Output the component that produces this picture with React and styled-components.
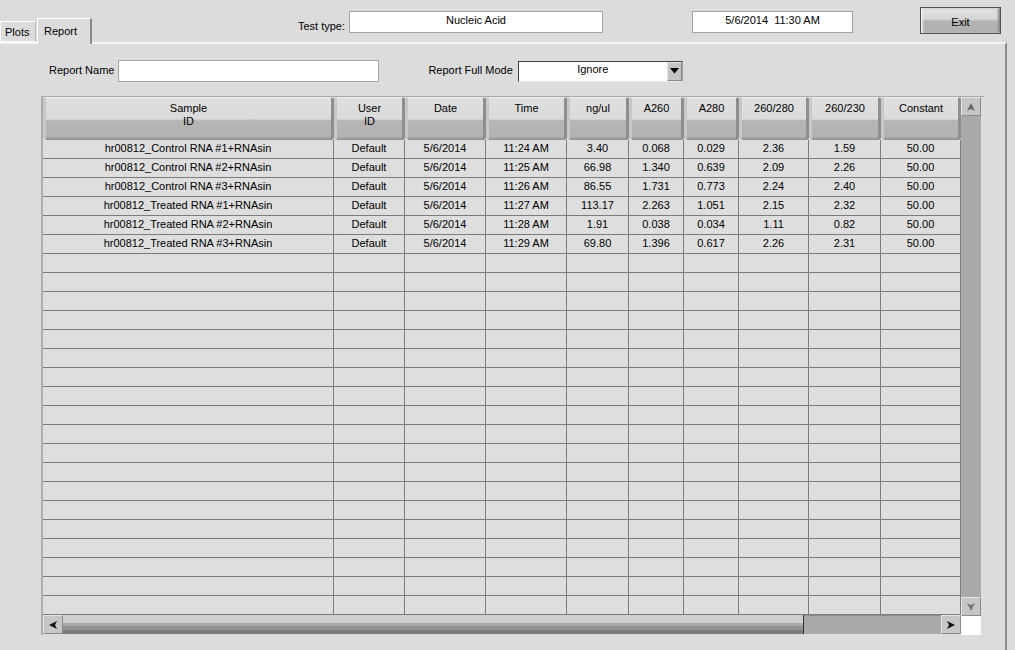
import React from "react";
import styled, { createGlobalStyle } from "styled-components";

const GlobalStyle = createGlobalStyle`
    html, body {
        margin: 0;
        padding: 0;
        background: #dcdcdc;
    }
    body {
        font-family: "Liberation Sans", Arial, sans-serif;
        font-size: 11px;
        color: #000;
    }
`;

const columns = [
    { title: ["Sample", "ID"], width: 291 },
    { title: ["User", "ID"], width: 71 },
    { title: ["Date"], width: 81 },
    { title: ["Time"], width: 81 },
    { title: ["ng/ul"], width: 62 },
    { title: ["A260"], width: 55 },
    { title: ["A280"], width: 55 },
    { title: ["260/280"], width: 70 },
    { title: ["260/230"], width: 72 },
    { title: ["Constant"], width: 80 },
];

const rows = [
    ["hr00812_Control RNA #1+RNAsin", "Default", "5/6/2014", "11:24 AM", "3.40", "0.068", "0.029", "2.36", "1.59", "50.00"],
    ["hr00812_Control RNA #2+RNAsin", "Default", "5/6/2014", "11:25 AM", "66.98", "1.340", "0.639", "2.09", "2.26", "50.00"],
    ["hr00812_Control RNA #3+RNAsin", "Default", "5/6/2014", "11:26 AM", "86.55", "1.731", "0.773", "2.24", "2.40", "50.00"],
    ["hr00812_Treated RNA #1+RNAsin", "Default", "5/6/2014", "11:27 AM", "113.17", "2.263", "1.051", "2.15", "2.32", "50.00"],
    ["hr00812_Treated RNA #2+RNAsin", "Default", "5/6/2014", "11:28 AM", "1.91", "0.038", "0.034", "1.11", "0.82", "50.00"],
    ["hr00812_Treated RNA #3+RNAsin", "Default", "5/6/2014", "11:29 AM", "69.80", "1.396", "0.617", "2.26", "2.31", "50.00"],
];

const TOTAL_ROWS = 25;
const gridCols = columns.map((c) => c.width + "px").join(" ");

const App = () => {
    const allRows = [];
    for (let i = 0; i < TOTAL_ROWS; i++) {
        allRows.push(rows[i] || columns.map(() => ""));
    }

    return (
        <Page>
            <GlobalStyle />
            <TopRow>
                <Tabs>
                    <Tab>Plots</Tab>
                    <Tab active>Report</Tab>
                </Tabs>
                <FieldGroup>
                    <TopLabel>Test type:</TopLabel>
                    <ReadBox width={254}>Nucleic Acid</ReadBox>
                </FieldGroup>
                <DateBox>
                    <ReadBox width={161}>5/6/2014&nbsp;&nbsp;11:30 AM</ReadBox>
                </DateBox>
                <ExitButton>Exit</ExitButton>
            </TopRow>

            <Panel>
                <FormRow>
                    <FormLabel>Report Name</FormLabel>
                    <TextInput />
                    <FormLabel gap={49}>Report Full Mode</FormLabel>
                    <Select>
                        <SelectValue>Ignore</SelectValue>
                        <SelectArrow>
                            <svg width="9" height="6" viewBox="0 0 9 6">
                                <path d="M0 0 H9 L4.5 5.5 Z" fill="#000" />
                            </svg>
                        </SelectArrow>
                    </Select>
                </FormRow>

                <TableFrame>
                    <TableMain>
                        <HeaderRow>
                            {columns.map((c, i) => (
                                <HeaderCell key={i}>
                                    {c.title.map((t, j) => (
                                        <div key={j}>{t}</div>
                                    ))}
                                </HeaderCell>
                            ))}
                        </HeaderRow>
                        {allRows.map((r, i) => (
                            <BodyRow key={i}>
                                {r.map((v, j) => (
                                    <Cell key={j}>{v}</Cell>
                                ))}
                            </BodyRow>
                        ))}
                        <HScroll>
                            <ScrollBtn>
                                <svg width="10" height="10" viewBox="0 0 10 10">
                                    <path d="M1 5 L9 1 L7 5 L9 9 Z" fill="#111" />
                                </svg>
                            </ScrollBtn>
                            <HThumb />
                            <HTrack />
                            <ScrollBtn>
                                <svg width="10" height="10" viewBox="0 0 10 10">
                                    <path d="M9 5 L1 1 L3 5 L1 9 Z" fill="#111" />
                                </svg>
                            </ScrollBtn>
                        </HScroll>
                    </TableMain>
                    <VScrollCol>
                        <VScroll>
                            <ScrollBtn>
                                <svg width="10" height="10" viewBox="0 0 10 10">
                                    <path d="M5 1 L9 9 L5 7 L1 9 Z" fill="#666" />
                                </svg>
                            </ScrollBtn>
                            <VTrack />
                            <ScrollBtn>
                                <svg width="10" height="10" viewBox="0 0 10 10">
                                    <path d="M5 9 L9 1 L5 3 L1 1 Z" fill="#777" />
                                </svg>
                            </ScrollBtn>
                        </VScroll>
                        <Corner />
                    </VScrollCol>
                </TableFrame>
            </Panel>
        </Page>
    );
};

const Page = styled.div`
    width: 1015px;
    height: 650px;
    overflow: hidden;
    background: #dcdcdc;
`;

const TopRow = styled.div`
    display: flex;
    align-items: flex-start;
    height: 42px;
`;

const Tabs = styled.div`
    display: flex;
    align-self: flex-end;
    align-items: flex-end;
    width: 92px;
    height: 26px;
`;

const Tab = styled.div`
    box-sizing: border-box;
    height: ${(props) => (props.active ? "26px" : "21px")};
    margin-bottom: ${(props) => (props.active ? "-2px" : "0")};
    padding: ${(props) => (props.active ? "6px 0 0 6px" : "4px 0 0 4px")};
    width: ${(props) => (props.active ? "55px" : "36px")};
    margin-left: ${(props) => (props.active ? "1px" : "0")};
    background: #dcdcdc;
    border-top: 1px solid #fff;
    border-left: 1px solid #fff;
    border-right: ${(props) => (props.active ? "2px solid #8a8a8a" : "1px solid #bdbdbd")};
    border-bottom: ${(props) => (props.active ? "none" : "1px solid #fff")};
    position: relative;
    z-index: ${(props) => (props.active ? 2 : 1)};
`;

const FieldGroup = styled.div`
    display: flex;
    align-items: flex-start;
    margin-left: 158px;
    margin-top: 11px;
`;

const TopLabel = styled.div`
    width: 95px;
    text-align: right;
    padding-top: 9px;
    margin-right: 4px;
`;

const ReadBox = styled.div`
    box-sizing: border-box;
    width: ${(props) => props.width}px;
    height: 22px;
    background: #fff;
    border: 1px solid #a4a4a4;
    text-align: center;
    padding-top: 2px;
`;

const DateBox = styled.div`
    margin-left: 89px;
    margin-top: 11px;
`;

const ExitButton = styled.div`
    box-sizing: border-box;
    width: 81px;
    height: 27px;
    margin-left: 67px;
    margin-top: 7px;
    border: 1px solid #505050;
    background: linear-gradient(to bottom, #e2e2e2 0%, #d6d6d6 45%, #b4b4b4 52%, #b0b0b0 100%);
    box-shadow: inset 2px 0 2px #eaeaea, inset -2px 0 2px #8c8c8c;
    text-align: center;
    padding-top: 8px;
`;

const Panel = styled.div`
    box-sizing: border-box;
    width: 1007px;
    height: 608px;
    border-top: 2px solid #f4f4f4;
    border-right: 2px solid #8c8c8c;
    padding: 16px 0 0 41px;
`;

const FormRow = styled.div`
    display: flex;
    align-items: center;
    height: 22px;
`;

const FormLabel = styled.div`
    margin-left: ${(props) => (props.gap ? props.gap : 8)}px;
    margin-right: 4px;
    padding-bottom: 2px;
`;

const TextInput = styled.div`
    box-sizing: border-box;
    width: 261px;
    height: 22px;
    background: #fff;
    border: 1px solid #a4a4a4;
`;

const Select = styled.div`
    box-sizing: border-box;
    display: flex;
    width: 165px;
    height: 21px;
    background: #fff;
    border-top: 1px solid #404040;
    border-left: 1px solid #404040;
    border-right: 1px solid #a0a0a0;
    border-bottom: 1px solid #e8e8e8;
    margin-left: 1px;
`;

const SelectValue = styled.div`
    flex: 1;
    text-align: center;
    padding-top: 1px;
`;

const SelectArrow = styled.div`
    box-sizing: border-box;
    width: 15px;
    display: flex;
    align-items: center;
    justify-content: center;
    background: #c4c4c4;
    border: 1px solid #8a8a8a;
    border-top-color: #e4e4e4;
    border-left-color: #e4e4e4;
`;

const TableFrame = styled.div`
    display: flex;
    width: 941px;
    margin-top: 14px;
    border-top: 1px solid #a8a8a8;
    border-left: 2px solid #acacac;
`;

const TableMain = styled.div`
    display: flex;
    flex-direction: column;
    width: 918px;
`;

const HeaderRow = styled.div`
    display: grid;
    grid-template-columns: ${gridCols};
    height: 43px;
`;

const HeaderCell = styled.div`
    box-sizing: border-box;
    height: 43px;
    padding-top: 4px;
    text-align: center;
    line-height: 13px;
    background: linear-gradient(to bottom, #e0e0e0 0%, #dadada 50%, #b5b5b5 54%, #b2b2b2 92%, #8c8c8c 100%);
    border-top: 1px solid #f0f0f0;
    border-left: 3px solid #c8c8c8;
    border-right: 3px solid #8e8e8e;
    border-radius: 3px;
`;

const BodyRow = styled.div`
    display: grid;
    grid-template-columns: ${gridCols};
    height: 19px;
`;

const Cell = styled.div`
    box-sizing: border-box;
    height: 19px;
    line-height: 17px;
    text-align: center;
    white-space: nowrap;
    overflow: hidden;
    background: #dedede;
    border-right: 1px solid #7c7c7c;
    border-bottom: 1px solid #7c7c7c;
`;

const HScroll = styled.div`
    display: flex;
    height: 19px;
`;

const ScrollBtn = styled.div`
    box-sizing: border-box;
    width: 20px;
    height: 19px;
    display: flex;
    align-items: center;
    justify-content: center;
    background: #c6c6c6;
    border: 1px solid #8a8a8a;
    border-top-color: #e6e6e6;
    border-left-color: #e6e6e6;
`;

const HThumb = styled.div`
    width: 740px;
    background: linear-gradient(to bottom, #cfcfcf 0%, #cfcfcf 40%, #a9a9a9 40%, #a9a9a9 60%, #949494 60%, #949494 80%, #7c7c7c 80%, #7c7c7c 100%);
    border-right: 1px solid #333;
`;

const HTrack = styled.div`
    flex: 1;
    background: #a9a9a9;
    border-top: 1px solid #8a8a8a;
`;

const VScrollCol = styled.div`
    display: flex;
    flex-direction: column;
    width: 20px;
`;

const VScroll = styled.div`
    display: flex;
    flex-direction: column;
    height: 519px;
    background: #a9a9a9;
`;

const VTrack = styled.div`
    flex: 1;
`;

const Corner = styled.div`
    height: 19px;
    background: #fff;
`;

export default App;
